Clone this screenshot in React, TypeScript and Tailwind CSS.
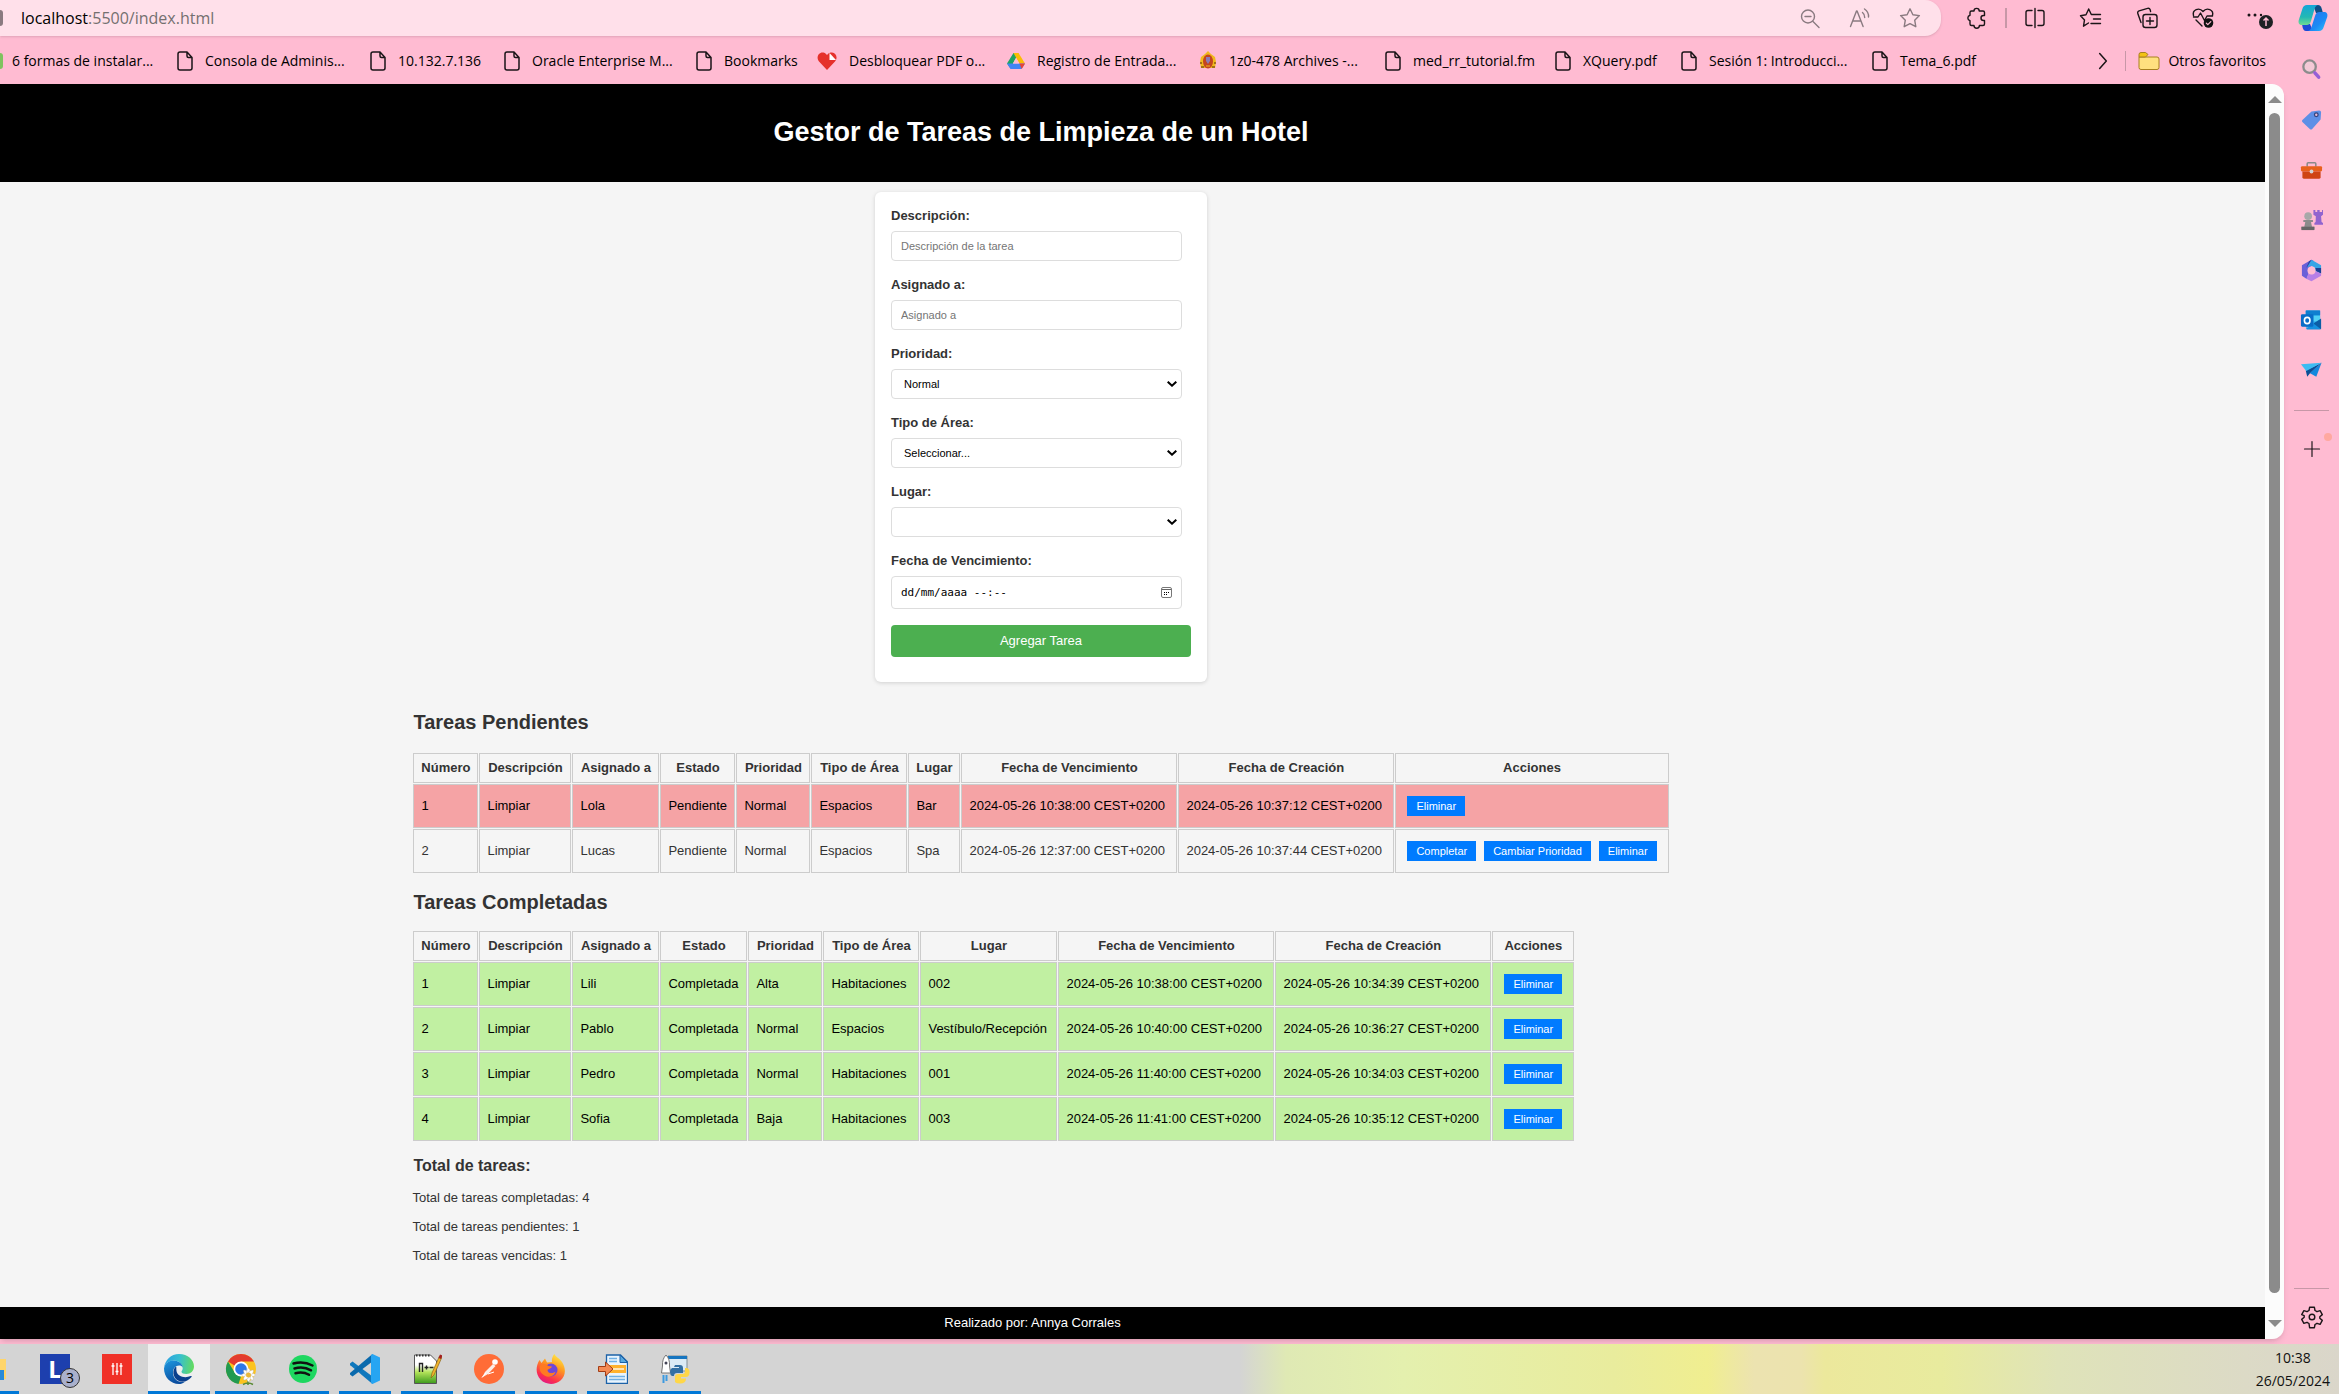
import React from "react";

type Kids = { children: React.ReactNode };

/* ---------- Browser toolbar icons ---------- */

function Line({ children, size = "size-6", color = "text-[#1b1518]" }: Kids & { size?: string; color?: string }) {
  return (
    <svg viewBox="0 0 24 24" className={`${size} ${color} shrink-0`} fill="none" stroke="currentColor" strokeWidth="1.4" strokeLinecap="round" strokeLinejoin="round" aria-hidden="true">
      {children}
    </svg>
  );
}

const ZoomOut = () => (
  <Line color="text-[#8a7a80]">
    <circle cx="10" cy="10.500" r="6.500" />
    <path d="M7 10.500h6M15 15.500l6 6" />
  </Line>
);

const ReadAloud = () => (
  <Line color="text-[#8a7a80]">
    <path d="M2.500 20.500L8.500 5h.6l6 15.500M5 15h8M14.500 6.500c1.700 1.300 2.300 3 2.200 5M16.500 3c3 2 4.300 4.500 4 8" />
  </Line>
);

const Star = () => (
  <Line color="text-[#8a7a80]">
    <path d="M12 2.800l2.900 5.900 6.500.9-4.700 4.600 1.100 6.500L12 17.600l-5.800 3.100 1.100-6.500L2.600 9.600l6.500-.9z" />
  </Line>
);

const Puzzle = () => (
  <Line>
    <path d="M9 5a2.600 2.600 0 0 1 5.200 0h3.800a1.500 1.500 0 0 1 1.500 1.500v3h-1a2.500 2.500 0 0 0 0 5h1v3.500a1.500 1.500 0 0 1-1.500 1.500h-3.600a2.700 2.700 0 0 1-5.400 0H6.500A1.500 1.500 0 0 1 5 18v-3.200a2.900 2.900 0 0 1 0-5.600V6.500A1.500 1.500 0 0 1 6.500 5z" />
  </Line>
);

const SplitScreen = () => (
  <Line>
    <path d="M12 2.500v19M9 4.500H5a2 2 0 0 0-2 2v11a2 2 0 0 0 2 2h4M15 4.500h4a2 2 0 0 1 2 2v11a2 2 0 0 1-2 2h-4" />
  </Line>
);

const Favorites = () => (
  <Line>
    <path d="M13.500 8.500h-1.200L9.700 3 7 8.800l-5.500.9 4 4.200-1 6.300L9.500 17M13.500 8.500h8M14.500 13h7M12 17.500h9.500" />
  </Line>
);

const Collections = () => (
  <Line>
    <rect x="8" y="8.500" width="14" height="13" rx="2.500" />
    <path d="M15 11.500v7M11.500 15h7M6 16.500l-3.200-9a2 2 0 0 1 1.300-2.600l8.500-2.500c1.200-.3 2.200.3 2.600 1.400l.4 1.700" />
  </Line>
);

const Essentials = () => (
  <Line>
    <path d="M2.500 9.500C1 4 8 .8 12 5.500c4-4.700 11-1.500 9.500 4M2.500 11h4.500l2.500-4 4 7.500 2.500-4.500h5.500M5 14l6 6" />
    <circle cx="17.500" cy="17" r="4.800" fill="#111" stroke="none" />
    <path d="M15.300 17.200l1.500 1.500 3-3" stroke="#ffbbd2" strokeWidth="1.200" />
  </Line>
);

function MoreMenu() {
  return (
    <svg viewBox="0 0 30 30" className="size-[30px]" aria-hidden="true">
      <circle cx="5" cy="12" r="1.500" fill="#1b1518" />
      <circle cx="11" cy="12" r="1.500" fill="#1b1518" />
      <circle cx="17" cy="12" r="1.200" fill="#1b1518" />
      <circle cx="22" cy="19" r="7" fill="#1e2124" />
      <path d="M22 23v-8M19.500 17.500L22 15l2.500 2.500" stroke="#ffbbd2" strokeWidth="1.500" fill="none" />
    </svg>
  );
}

function Copilot() {
  return (
    <svg viewBox="0 0 30 28" className="h-7 w-[30px]" aria-hidden="true">
      <defs>
        <linearGradient id="cpA" x1="0" y1="0" x2="0" y2="1">
          <stop offset="0" stopColor="#17a5d8" />
          <stop offset=".6" stopColor="#22b8b4" />
          <stop offset="1" stopColor="#6fdc92" />
        </linearGradient>
        <linearGradient id="cpB" x1="0" y1="0" x2="1" y2="1">
          <stop offset="0" stopColor="#2870ea" />
          <stop offset=".6" stopColor="#1b8bf5" />
          <stop offset="1" stopColor="#2ec3fb" />
        </linearGradient>
      </defs>
      <path d="M15 1h5c2 0 3 1.400 3.500 3L25 9h-7z" fill="#0f4f86" />
      <path d="M8 27c-2 0-2.700-1.300-3.300-3.200L4 20h8l3 7z" fill="#1d49d6" />
      <path d="M9 1h11c-2 .4-3 2-3.500 4L13 17c-.8 2.600-2 4-4.500 4H4c-2.800 0-4-2-3.200-5L4.500 4.500C5.200 2.300 6.600 1 9 1z" fill="url(#cpA)" />
      <path d="M21 27H10c2-.4 3-2 3.500-4L17 12c.8-2.600 2-4 4.500-4H26c2.800 0 4 2 3.200 5l-3.700 10.500C24.800 25.700 23.400 27 21 27z" fill="url(#cpB)" />
    </svg>
  );
}

/* ---------- Bookmark icons ---------- */

const PageIcon = () => (
  <svg viewBox="0 0 16 20" className="h-5 w-4 shrink-0" fill="none" stroke="#1b1518" strokeWidth="1.500" strokeLinejoin="round" aria-hidden="true">
    <path d="M10 1H3a2 2 0 0 0-2 2v14a2 2 0 0 0 2 2h10a2 2 0 0 0 2-2V6.500zM10 1v4a1.500 1.500 0 0 0 1.500 1.500H15" />
  </svg>
);

const HeartIcon = () => (
  <svg viewBox="0 0 20 18" className="h-[18px] w-5 shrink-0" aria-hidden="true">
    <path d="M10 18L2 9.500C-1.500 5 2-.5 6.500.5 8.500 1 10 3 10 3s2-3 5-2.500C19.500 1 21 6 18 9.500z" fill="#e5302b" />
    <path d="M12.500 1l6.500 7h-6.500z" fill="#fff" />
  </svg>
);

const DriveIcon = () => (
  <svg viewBox="0 0 18 18" className="size-[18px] shrink-0" aria-hidden="true">
    <path d="M6.500 1h5L3.500 16.500 0 11.500z" fill="#1fa463" />
    <path d="M6.500 1h5L18 11.500h-5.500z" fill="#fbbc04" />
    <path d="M3.500 17L0 11.500h18L14.500 17z" fill="#4285f4" />
    <path d="M12.500 11.500H18L14.700 17z" fill="#ea4335" />
    <path d="M9 6l3.200 5.500H5.800z" fill="#ffbbd2" />
  </svg>
);

const CrestIcon = () => (
  <svg viewBox="0 0 18 20" className="h-5 w-[18px] shrink-0" aria-hidden="true">
    <path d="M6 3l3-3 3 3 4 3 1 5-1 6H2l-1-6 1-5z" fill="#f0b81c" />
    <ellipse cx="9" cy="10.500" rx="5" ry="7" fill="#c4451f" />
    <path d="M2 16h3M13 16h3M1 12h2M15 12h2" stroke="#8a5a12" strokeWidth="1.500" />
    <path d="M7 6h4v4l-2 3-2-3z" fill="#8d7bb5" />
    <path d="M7 15h4" stroke="#f0b81c" />
  </svg>
);

const FolderIcon = () => (
  <svg viewBox="0 0 22 20" className="h-5 w-[22px] shrink-0" aria-hidden="true">
    <path d="M1 6h18a2 2 0 0 1 2 2v8.500a2 2 0 0 1-2 2H3a2 2 0 0 1-2-2z" fill="#ffe07f" stroke="#a8801f" />
    <path d="M1 6V3.500a2 2 0 0 1 2-2h4.500L10 3.500 7.500 6z" fill="#f2c214" stroke="#a8801f" />
  </svg>
);

const bookmarks = [
  { text: "Consola de Adminis...", icon: <PageIcon />, width: "w-[193px]" },
  { text: "10.132.7.136", icon: <PageIcon />, width: "w-[134px]" },
  { text: "Oracle Enterprise M...", icon: <PageIcon />, width: "w-[192px]" },
  { text: "Bookmarks", icon: <PageIcon />, width: "w-[121px]" },
  { text: "Desbloquear PDF o...", icon: <HeartIcon />, width: "w-[190px]" },
  { text: "Registro de Entrada...", icon: <DriveIcon />, width: "w-[192px]" },
  { text: "1z0-478 Archives -...", icon: <CrestIcon />, width: "w-[186px]" },
  { text: "med_rr_tutorial.fm", icon: <PageIcon />, width: "w-[170px]" },
  { text: "XQuery.pdf", icon: <PageIcon />, width: "w-[126px]" },
  { text: "Sesión 1: Introducci...", icon: <PageIcon />, width: "w-[191px]" },
  { text: "Tema_6.pdf", icon: <PageIcon />, width: "w-[120px]" },
];

function ToolButton({ label, children, width = "w-14" }: Kids & { label: string; width?: string }) {
  return (
    <button type="button" aria-label={label} className={`flex h-9 shrink-0 items-center justify-center ${width}`}>
      {children}
    </button>
  );
}

function Toolbar() {
  return (
    <div className="flex h-9 items-center font-['Open_Sans','Noto_Sans',sans-serif]">
      <div className="flex h-9 flex-1 items-center rounded-r-2xl bg-[#ffe0ea] shadow-sm">
        <div className="h-4 w-[3px] rounded-r-full bg-[#8a7a80]" />
        <p className="flex-1 pl-[18px] text-base text-[#747070]">
          <span className="text-black">localhost</span>:5500/index.html
        </p>
        <ToolButton label="Alejar" width="w-[50px]"><ZoomOut /></ToolButton>
        <ToolButton label="Leer en voz alta" width="w-[50px]"><ReadAloud /></ToolButton>
        <ToolButton label="Agregar a favoritos" width="w-[50px]"><Star /></ToolButton>
        <div className="w-1.5" />
      </div>
      <div className="w-2" />
      <ToolButton label="Extensiones"><Puzzle /></ToolButton>
      <div className="h-5 w-0.5 bg-[#c797a7]" />
      <ToolButton label="Pantalla dividida"><SplitScreen /></ToolButton>
      <ToolButton label="Favoritos"><Favorites /></ToolButton>
      <ToolButton label="Colecciones"><Collections /></ToolButton>
      <ToolButton label="Rendimiento"><Essentials /></ToolButton>
      <ToolButton label="Configuración y más"><MoreMenu /></ToolButton>
      <ToolButton label="Copilot" width="w-[52px]"><Copilot /></ToolButton>
    </div>
  );
}

function BookmarkBar() {
  return (
    <nav className="flex h-12 items-center overflow-hidden whitespace-nowrap pt-0.5 font-['Open_Sans','Noto_Sans',sans-serif] text-sm text-black">
      <a href="#" className="flex w-[177px] shrink-0 items-center gap-[9px]">
        <span className="h-4 w-[3px] rounded-r-full bg-[#7fc25f]" />
        6 formas de instalar...
      </a>
      {bookmarks.map((b) => (
        <a key={b.text} href="#" className={`flex shrink-0 items-center gap-3 ${b.width}`}>
          {b.icon}
          {b.text}
        </a>
      ))}
      <div className="ml-auto flex items-center pr-[18px]">
        <button type="button" aria-label="Más marcadores">
          <Line size="size-5"><path d="M8 3l8 9-8 9" strokeWidth="1.800" /></Line>
        </button>
        <div className="mx-3 h-5 w-px bg-[#c797a7]" />
        <a href="#" className="flex items-center gap-2">
          <FolderIcon />
          Otros favoritos
        </a>
      </div>
    </nav>
  );
}

/* ---------- Sidebar ---------- */

const sideIcons = [
  {
    label: "Buscar",
    art: (
      <>
        <circle cx="10" cy="8" r="6.500" fill="#f3c9d6" stroke="#8c8c8c" strokeWidth="2.400" />
        <path d="M15.500 14.500l4 4.500" stroke="#9560d6" strokeWidth="3.600" strokeLinecap="round" />
      </>
    ),
  },
  {
    label: "Compras",
    art: (
      <>
        <path d="M12 2.500L20 1.500q2 0 2 2L21.500 11l-9 10q-1 1-2 0L2.500 13.500q-1-1 0-2z" fill="#5d8fe6" />
        <circle cx="17" cy="6" r="1.900" fill="#e7b9d5" stroke="#33437d" strokeWidth="1.300" />
      </>
    ),
  },
  {
    label: "Herramientas",
    art: (
      <>
        <path d="M7.500 8V5q0-1 1-1h7q1 0 1 1v3" fill="none" stroke="#8a8a8a" strokeWidth="1.600" />
        <rect x="1" y="7.500" width="22" height="5.500" rx="1.200" fill="#e8601c" />
        <path d="M2.500 13h19v6q0 1.500-1.500 1.500H4q-1.500 0-1.500-1.500z" fill="#cf4414" />
        <circle cx="12" cy="13" r="2" fill="#d3d3d3" />
      </>
    ),
  },
  {
    label: "Juegos",
    art: (
      <>
        <path d="M14 1h2v2h2V1h2.500v2H23V1h1v5l-2 1.500.5 6 1.500 1v2h-9v-2l1.300-1 .2-6L14 6z" fill="#9164cf" />
        <circle cx="8.500" cy="7.500" r="4" fill="#a8a8a8" />
        <path d="M3.500 11.500h10v2h-2l1 5h2.500v3H1.500v-3H4.500l1-5h-2z" fill="#8b8b8b" />
        <path d="M1.500 18.500h13.500v3.500H1.500z" fill="#666" />
      </>
    ),
  },
  {
    label: "Microsoft 365",
    art: (
      <>
        <path d="M12 .8L2 6.500v11l5 3.300 2-6-.5-5 3.500-2.500 2-5.500z" fill="#6a5fd8" />
        <path d="M12 .8l10 5.700v8.500l-6-2.500-1-4-4-1.500L7 9z" fill="#38a5e6" />
        <path d="M22 9.500v5.500l-5.500-2.500-.5-3z" fill="#1c3f96" />
        <path d="M22 15v2.500L12 23.200 6.500 20.500 9 15l4 1 3-3.500z" fill="#b77fe6" />
        <path d="M7 9l5-8.200L9.500 2.300 7 8z" fill="#27459f" />
        <circle cx="12" cy="12" r="4.200" fill="#ffbbd2" />
      </>
    ),
  },
  {
    label: "Outlook",
    art: (
      <>
        <rect x="6" y="1.500" width="15" height="18" rx="1" fill="#28a8ea" />
        <path d="M6 1.500h15v5H6z" fill="#0e7fd0" />
        <path d="M14 7h7v6h-7z" fill="#50d0f5" />
        <path d="M6 20.500L22 11v9q0 1.500-1.500 1.500h-13z" fill="#1490df" />
        <path d="M22 21L14 15l8-5z" fill="#0b5da5" />
        <rect x="1" y="5.500" width="13" height="13" rx="1.200" fill="#0a6cc7" />
        <ellipse cx="7.500" cy="12" rx="2.900" ry="3.300" fill="none" stroke="#fff" strokeWidth="1.700" />
      </>
    ),
  },
  {
    label: "Drop",
    art: (
      <>
        <path d="M22.500 4L17 18.500 10 14.500z" fill="#1488dd" />
        <path d="M22.500 4L6 12l1.500 6.500L11 14z" fill="#0b4f96" />
        <path d="M1 5.500L6.500 12.500 22.500 4z" fill="#3cbcf2" />
      </>
    ),
  },
];

function Sidebar() {
  return (
    <aside className="flex w-[55px] shrink-0 flex-col items-center pt-[9px]">
      {sideIcons.map((s) => (
        <button key={s.label} type="button" aria-label={s.label} className="flex h-[50px] w-full items-center justify-center">
          <svg viewBox="0 0 24 24" className="size-[23px]" aria-hidden="true">{s.art}</svg>
        </button>
      ))}
      <hr className="mt-[15px] w-[35px] border-[#c797a7]" />
      <button type="button" aria-label="Personalizar" className="relative mt-[13px] flex h-[50px] w-full items-center justify-center">
        <Line size="size-5"><path d="M12 3v18M3 12h18" /></Line>
        <span className="absolute right-[7px] top-[9px] size-2 rounded-full bg-[#ffa8a0]" />
      </button>
      <hr className="mt-auto w-[35px] border-[#c797a7]" />
      <button type="button" aria-label="Configuración" className="flex h-[55px] w-full items-center justify-center">
        <Line>
          <circle cx="12" cy="12" r="2.800" />
          <path d="M9.600 2.300h4.800l.6 3.200 2 1.200 3.100-1.100 2.200 4-2.500 2.100v1.600l2.500 2.100-2.200 4-3.100-1.100-2 1.200-.6 3.200H9.600L9 18.500l-2-1.200-3.100 1.100-2.200-4 2.500-2.100v-1.600L1.700 9.600l2.200-4L7 6.700l2-1.200z" />
        </Line>
      </button>
    </aside>
  );
}

/* ---------- Hotel cleaning page ---------- */

const fieldBox = "w-full rounded-sm border border-[#dddddd] bg-white text-[11px]";

function Field({ id, label, children }: Kids & { id: string; label: string }) {
  return (
    <div className="mb-4">
      <label htmlFor={id} className="mb-[7px] block text-[13px] leading-4 font-bold text-[#333333]">{label}</label>
      <div className="relative w-[291px]">{children}</div>
    </div>
  );
}

function Select({ id, options }: { id: string; options: string[] }) {
  return (
    <>
      <select id={id} className={`${fieldBox} h-[30px] appearance-none px-3 text-black`}>
        {options.map((o) => <option key={o}>{o}</option>)}
      </select>
      <svg viewBox="0 0 10 6" className="pointer-events-none absolute right-[5px] top-3 h-1.5 w-2.5" fill="none" stroke="#000" strokeWidth="2" aria-hidden="true">
        <path d="M.7.700L5 4.700 9.300.700" />
      </svg>
    </>
  );
}

function TaskForm() {
  return (
    <form className="mt-2.5 w-[332px] rounded-md bg-white p-4 pb-[25px] shadow-[0_1px_4px_rgba(0,0,0,0.15)]">
      <Field id="descripcion" label="Descripción:">
        <input id="descripcion" placeholder="Descripción de la tarea" className={`${fieldBox} block h-[30px] px-[9px] placeholder:text-[#757575]`} />
      </Field>
      <Field id="asignado" label="Asignado a:">
        <input id="asignado" placeholder="Asignado a" className={`${fieldBox} block h-[30px] px-[9px] placeholder:text-[#757575]`} />
      </Field>
      <Field id="prioridad" label="Prioridad:"><Select id="prioridad" options={["Normal", "Alta", "Baja"]} /></Field>
      <Field id="area" label="Tipo de Área:"><Select id="area" options={["Seleccionar...", "Habitaciones", "Espacios"]} /></Field>
      <Field id="lugar" label="Lugar:"><Select id="lugar" options={[""]} /></Field>
      <Field id="fecha" label="Fecha de Vencimiento:">
        <input id="fecha" placeholder="dd/mm/aaaa --:--" className={`${fieldBox} block h-[33px] px-[9px] font-['DejaVu_Sans_Mono','Liberation_Mono',monospace] placeholder:text-black`} />
        <button type="button" aria-label="Abrir calendario" className="absolute right-2.5 top-[11px]">
          <svg viewBox="0 0 11 11" className="block size-[11px]" aria-hidden="true">
            <rect x=".5" y=".5" width="10" height="10" rx="1.500" fill="#fff" stroke="#777" />
            <path d="M1 2.500h9" stroke="#666" />
            <path d="M5 5h1v1H5zM7 5h1v1H7zM3 7h1v1H3zM5 7h1v1H5zM3 5h1v1H3z" fill="#000" />
          </svg>
        </button>
      </Field>
      <button type="button" className="block h-8 w-full rounded-sm bg-[#4caf50] text-[13px] text-white">Agregar Tarea</button>
    </form>
  );
}

type Column = { name: string; width: string };
type Row = { cells: string[]; tone: string; actions: string[] };

const pendingColumns: Column[] = [
  { name: "Número", width: "w-[65px]" },
  { name: "Descripción", width: "w-[92px]" },
  { name: "Asignado a", width: "w-[87px]" },
  { name: "Estado", width: "w-[75px]" },
  { name: "Prioridad", width: "w-[74px]" },
  { name: "Tipo de Área", width: "w-[96px]" },
  { name: "Lugar", width: "w-[52px]" },
  { name: "Fecha de Vencimiento", width: "w-[216px]" },
  { name: "Fecha de Creación", width: "w-[216px]" },
  { name: "Acciones", width: "w-[271px]" },
];

const doneColumns: Column[] = [
  { name: "Número", width: "w-[65px]" },
  { name: "Descripción", width: "w-[92px]" },
  { name: "Asignado a", width: "w-[87px]" },
  { name: "Estado", width: "w-[87px]" },
  { name: "Prioridad", width: "w-[74px]" },
  { name: "Tipo de Área", width: "w-[96px]" },
  { name: "Lugar", width: "w-[137px]" },
  { name: "Fecha de Vencimiento", width: "w-[216px]" },
  { name: "Fecha de Creación", width: "w-[216px]" },
  { name: "Acciones", width: "w-[81px]" },
];

const green = "bg-[#c1f0a2] text-black";

const pendingRows: Row[] = [
  { tone: "bg-[#f5a3a5] text-black", actions: ["Eliminar"], cells: ["1", "Limpiar", "Lola", "Pendiente", "Normal", "Espacios", "Bar", "2024-05-26 10:38:00 CEST+0200", "2024-05-26 10:37:12 CEST+0200"] },
  { tone: "", actions: ["Completar", "Cambiar Prioridad", "Eliminar"], cells: ["2", "Limpiar", "Lucas", "Pendiente", "Normal", "Espacios", "Spa", "2024-05-26 12:37:00 CEST+0200", "2024-05-26 10:37:44 CEST+0200"] },
];

const doneRows: Row[] = [
  { tone: green, actions: ["Eliminar"], cells: ["1", "Limpiar", "Lili", "Completada", "Alta", "Habitaciones", "002", "2024-05-26 10:38:00 CEST+0200", "2024-05-26 10:34:39 CEST+0200"] },
  { tone: green, actions: ["Eliminar"], cells: ["2", "Limpiar", "Pablo", "Completada", "Normal", "Espacios", "Vestíbulo/Recepción", "2024-05-26 10:40:00 CEST+0200", "2024-05-26 10:36:27 CEST+0200"] },
  { tone: green, actions: ["Eliminar"], cells: ["3", "Limpiar", "Pedro", "Completada", "Normal", "Habitaciones", "001", "2024-05-26 11:40:00 CEST+0200", "2024-05-26 10:34:03 CEST+0200"] },
  { tone: green, actions: ["Eliminar"], cells: ["4", "Limpiar", "Sofia", "Completada", "Baja", "Habitaciones", "003", "2024-05-26 11:41:00 CEST+0200", "2024-05-26 10:35:12 CEST+0200"] },
];

function TaskTable({ columns, rows }: { columns: Column[]; rows: Row[] }) {
  return (
    <table className="border-separate border-spacing-px whitespace-nowrap text-[13px]">
      <thead>
        <tr>
          {columns.map((c) => (
            <th key={c.name} scope="col" className={`h-[30px] border border-[#cccccc] font-bold ${c.width}`}>{c.name}</th>
          ))}
        </tr>
      </thead>
      <tbody>
        {rows.map((r) => (
          <tr key={r.cells[0]}>
            {r.cells.map((text, i) => (
              <td key={i} className={`h-11 border border-[#cccccc] px-[7px] ${r.tone}`}>{text}</td>
            ))}
            <td className={`h-11 border border-[#cccccc] px-[11px] ${r.tone}`}>
              <div className="flex gap-2">
                {r.actions.map((a) => (
                  <button key={a} type="button" className="h-5 bg-[#007bff] px-[9px] text-[11px] text-white">{a}</button>
                ))}
              </div>
            </td>
          </tr>
        ))}
      </tbody>
    </table>
  );
}

function Page() {
  return (
    <div className="flex flex-1 flex-col bg-[#f5f5f5] font-['Liberation_Sans',Arial,sans-serif] text-[#333333]">
      <header className="flex h-[98px] items-center justify-center bg-black pr-[183px] pb-0.5">
        <h1 className="text-[27px] leading-8 font-bold text-white">Gestor de Tareas de Limpieza de un Hotel</h1>
      </header>
      <main className="flex flex-1 flex-col items-center pr-[183px]">
        <TaskForm />
        <div>
          <h2 className="mt-7 mb-[18px] pl-px text-xl leading-6 font-bold">Tareas Pendientes</h2>
          <TaskTable columns={pendingColumns} rows={pendingRows} />
          <h2 className="mt-4 mb-4 pl-px text-xl leading-6 font-bold">Tareas Completadas</h2>
          <TaskTable columns={doneColumns} rows={doneRows} />
          <h3 className="mt-3.5 mb-3.5 pl-px text-base leading-5 font-bold">Total de tareas:</h3>
          <div className="flex flex-col gap-[13px] text-[13px] leading-4">
            <p>Total de tareas completadas: 4</p>
            <p>Total de tareas pendientes: 1</p>
            <p>Total de tareas vencidas: 1</p>
          </div>
        </div>
      </main>
      <footer className="flex h-8 items-center justify-center bg-black pr-[200px] text-[13px] text-white">
        Realizado por: Annya Corrales
      </footer>
    </div>
  );
}

function Scrollbar() {
  return (
    <div className="flex w-[19px] flex-col items-center bg-[#fcfcfc] pt-3 pb-3">
      <svg viewBox="0 0 14 7" className="h-[7px] w-3.5" aria-hidden="true"><path d="M0 7L7 0l7 7z" fill="#8b8b8b" /></svg>
      <div className="mt-2.5 mb-[27px] w-[11px] flex-1 rounded-full bg-[#8b8b8b]" />
      <svg viewBox="0 0 14 7" className="h-[7px] w-3.5" aria-hidden="true"><path d="M0 0l7 7 7-7z" fill="#8b8b8b" /></svg>
    </div>
  );
}

/* ---------- Taskbar ---------- */

const Edge = () => (
  <svg viewBox="0 0 30 30" className="size-[30px]" aria-hidden="true">
    <defs>
      <linearGradient id="edgeTop" x1="0" y1=".4" x2="1" y2=".5">
        <stop offset="0" stopColor="#2a9fe0" />
        <stop offset=".5" stopColor="#36bfd0" />
        <stop offset="1" stopColor="#64db5d" />
      </linearGradient>
      <linearGradient id="edgeLow" x1="0" y1="0" x2=".4" y2="1">
        <stop offset="0" stopColor="#1c97e0" />
        <stop offset="1" stopColor="#0c4fa0" />
      </linearGradient>
    </defs>
    <path d="M0 14C1 6 7 0 15 0c9 0 15 6 15 12.500 0 4.500-3.500 7.500-7.500 7.500-3 0-5-1-5-2.300 0-1 1.200-1.400 1.200-3.500C18.700 10 14.500 6.500 9.500 6.500 5 6.500 1 9.500 0 14z" fill="url(#edgeTop)" />
    <path d="M0 14.500C1 9 5 6.500 9.500 6.500c4.700 0 9 3.200 9.200 7-.7-1.400-2-2-3.700-2-3.500 0-6 3-6 7 0 5.500 4 9.500 9 9.500 2 0 3-.3 3-.3C19 29.300 17 30 15 30 6.500 30 0 23 0 14.500z" fill="url(#edgeLow)" />
    <path d="M12 12.500c-4 3-3.500 11 2 14 4.500 2.400 9.500 1.300 13.500-3.500.5-.7 0-1.200-.7-.9-6.300 2.700-13.300.4-14.300-5.100-.4-2 .2-3.700-.5-4.500z" fill="#0a3f8c" />
  </svg>
);

const Chrome = () => (
  <svg viewBox="0 0 30 30" className="size-[30px] overflow-visible" aria-hidden="true">
    <circle cx="15" cy="15" r="15" fill="#fcc31e" />
    <path d="M2 7.500A15 15 0 0 1 28 7.500H15v8z" fill="#e33b2e" />
    <path d="M2 7.500L9 19l6 3.500L12.500 30A15 15 0 0 1 2 7.500z" fill="#219a50" />
    <circle cx="15" cy="15" r="7.500" fill="#fff" />
    <circle cx="15" cy="15" r="5.800" fill="#2f78e8" />
    <path d="M22 22v9M17 30.500q5-3 10 0" stroke="#5a8a35" strokeWidth="1.500" fill="none" />
    {[0, 45, 90, 135].map((a) => <ellipse key={a} cx="22.500" cy="21" rx="6.800" ry="2.100" fill="#fff" stroke="#b5ac98" strokeWidth=".4" transform={`rotate(${a} 22.500 21)`} />)}
    <circle cx="22.500" cy="21" r="2.500" fill="#e8b83a" />
  </svg>
);

const Spotify = () => (
  <svg viewBox="0 0 30 30" className="size-[30px]" aria-hidden="true">
    <circle cx="15" cy="15" r="14" fill="#1ed760" />
    <path d="M5.500 9.500q10-2.800 19 2M6.500 14.500q9-2.500 16.500 1.800M7.500 19.200q7.500-2 13.500 1.600" stroke="#111" strokeWidth="2.500" strokeLinecap="round" fill="none" />
  </svg>
);

const Code = () => (
  <svg viewBox="0 0 30 30" className="size-[30px]" aria-hidden="true">
    <path d="M0 9.500l2.500-2 20 15V30L.3 11.200q-.8-.8-.3-1.700z" fill="#0f78bd" />
    <path d="M0 20.500l2.500 2L22.500 7.500V0L.3 18.800q-.8.800-.3 1.700z" fill="#0a6aad" />
    <path d="M22.500 0L30 3.500v23L22.500 30q-1.500-.5-1.500-2V2q0-1.500 1.500-2z" fill="#27a5f2" />
  </svg>
);

const NotepadPP = () => (
  <svg viewBox="0 0 30 30" className="size-[30px]" aria-hidden="true">
    <defs>
      <linearGradient id="npp" x1="0" y1="0" x2="0" y2="1">
        <stop offset=".35" stopColor="#fff" />
        <stop offset=".6" stopColor="#b4e35a" />
        <stop offset="1" stopColor="#3c9a1c" />
      </linearGradient>
    </defs>
    <path d="M2.500 1h16l6 6v22.500h-22z" fill="url(#npp)" stroke="#555" />
    <path d="M4 1.500h15" stroke="#333" strokeWidth="2" strokeDasharray="1.500 1.500" />
    <path d="M7.500 18V9.500h3V18M12.500 13.500h4M14.500 11.500v4M17.500 13.500h4" stroke="#222" strokeWidth="1.400" fill="none" />
    <path d="M19 24l1-5L27.500 2l2.500 1L22 21z" fill="#f0b32a" stroke="#8a6418" strokeWidth=".7" />
    <path d="M26.500 4L28 .5l2.500 1L29 5z" fill="#a32020" />
  </svg>
);

const Postman = () => (
  <svg viewBox="0 0 30 30" className="size-[30px]" aria-hidden="true">
    <circle cx="15" cy="15" r="15" fill="#ff6c37" />
    <circle cx="21" cy="8" r="2.800" fill="#fff" />
    <path d="M19 10l2.500 2-7.500 8-6 3.500 3-5.500z" fill="#fbeee8" />
    <path d="M8 23.500l4-4.500M14 20l6-2" stroke="#fff" strokeWidth="1" />
  </svg>
);

const Firefox = () => (
  <svg viewBox="0 0 30 30" className="size-[30px]" aria-hidden="true">
    <defs>
      <linearGradient id="ff" x1=".8" y1="0" x2=".3" y2="1">
        <stop offset="0" stopColor="#fff04a" />
        <stop offset=".4" stopColor="#ff9a1f" />
        <stop offset=".8" stopColor="#fb2d4e" />
        <stop offset="1" stopColor="#e0188a" />
      </linearGradient>
    </defs>
    <path d="M18.500 0c1 3 5 4 7.500 8 4.500 7 3.500 14-1.500 18.500-6 5-15 4.300-20-1-5-5.500-5-13-1-19.500L5.500 9 9 4.500l2 4 5-.5c-.5-3 .5-6 2.500-8z" fill="url(#ff)" />
    <circle cx="15" cy="16" r="6.500" fill="#6f47d8" />
    <path d="M4 12c3-3 7-2 8 0l4 .5c-1 2.500-4 2-4.500 4 .5 3 5 3.500 8 1-1 5-7 6.500-11 4S3 16 4 12z" fill="#ff7a22" />
  </svg>
);

const DocExport = () => (
  <svg viewBox="0 0 30 30" className="size-[30px]" aria-hidden="true">
    <path d="M8.500 1h14l7 7v21.500h-21z" fill="#e9f4fd" stroke="#1c62a8" strokeWidth="1.300" />
    <path d="M22 1l7.500 7.500H22z" fill="#58a9e0" stroke="#1c62a8" />
    <path d="M11 4.500h8M11 7.500h8M11 22.500h16M11 25.500h16" stroke="#6fb0e5" strokeWidth="1.400" />
    <path d="M10 11h18v8H10z" fill="#ffb22e" />
    <path d="M12 15h14" stroke="#fff" strokeWidth="1.300" />
    <path d="M.5 12.500h7V8L15 15l-7.500 7v-4.500h-7z" fill="#f58b55" stroke="#a33c15" />
  </svg>
);

const PythonIde = () => (
  <svg viewBox="0 0 30 30" className="size-[30px]" aria-hidden="true">
    <path d="M8 2h19v15H8z" fill="#dcebf5" stroke="#7f8d96" />
    <path d="M8 2h19v3H8z" fill="#1675c0" />
    <path d="M6 1q4 4 3.500 11l1 7h-9l1-7Q2 5 6 1z" fill="#fff" stroke="#777" />
    <circle cx="6" cy="9" r="1.500" fill="#445" />
    <path d="M2.500 21h2v8h-2zM5.500 21h2v6h-2z" fill="#3d9ae0" />
    <path d="M15 11h5q3 0 3 3v5h-6q-3 0-3 3h-2q-2-1-2-4t2-4h7v-1h-5z" fill="#3470a3" />
    <path d="M25 14h2q3 1 2.500 5t-3.500 4h-5v1.500h5Q26 29.500 20 29.500T15 26v-3q0-3 3-3h5q2 0 2-3z" fill="#ffd747" />
  </svg>
);

const LApp = () => (
  <span className="relative flex size-[30px] items-center justify-center bg-[#1d3fae] text-2xl leading-none font-bold text-white">
    L
    <span className="absolute -right-2.5 -bottom-1 flex size-5 items-center justify-center rounded-full border border-[#333] bg-[#a9b0cc] text-sm leading-none font-normal text-black">3</span>
  </span>
);

const Mixer = () => (
  <svg viewBox="0 0 30 30" className="size-[30px]" aria-hidden="true">
    <path d="M0 0h30v30H0z" fill="#f03027" />
    <path d="M11 9v12M15 9v12M19 9v12" stroke="#fff" strokeWidth="1.300" />
    <path d="M9.500 12h3M13.500 17.500h3M17.500 12h3" stroke="#fff" strokeWidth="1.500" />
  </svg>
);

const apps = [
  { name: "LApp", icon: <LApp />, state: "idle" },
  { name: "Mezclador", icon: <Mixer />, state: "idle" },
  { name: "Edge", icon: <Edge />, state: "active" },
  { name: "Chrome", icon: <Chrome />, state: "open" },
  { name: "Spotify", icon: <Spotify />, state: "open" },
  { name: "Code", icon: <Code />, state: "open" },
  { name: "Notepad++", icon: <NotepadPP />, state: "open" },
  { name: "Postman", icon: <Postman />, state: "open" },
  { name: "Firefox", icon: <Firefox />, state: "open" },
  { name: "Documentos", icon: <DocExport />, state: "open" },
  { name: "Python", icon: <PythonIde />, state: "open" },
];

function Taskbar() {
  return (
    <div className="flex h-[50px] items-stretch bg-[linear-gradient(90deg,#d4d4d4_0%,#d4d4d4_53%,#dfe9b4_55%,#e4f0ae_60%,#e9ec9d_69%,#f0ee90_73%,#ece3b0_75%,#ece3ae_77%,#ece89c_78%,#e8eb9e_83%,#dfe3b9_88%,#dcdac6_96%,#dad6ca_100%)] font-['Open_Sans','Noto_Sans',sans-serif]">
      <button type="button" aria-label="Explorador" className="relative w-6">
        <svg viewBox="0 0 7 30" className="absolute left-0 top-2.5 h-[30px] w-[7px]" aria-hidden="true">
          <path d="M0 5h6v20H0z" fill="#ffd56a" />
          <path d="M0 16h4v10H0z" fill="#2a8bd8" />
        </svg>
        <span className="absolute bottom-0 left-0 h-[3px] w-[19px] bg-[#0078d7]" />
      </button>
      {apps.map((a) => (
        <button
          key={a.name}
          type="button"
          aria-label={a.name}
          className={`relative flex w-[62px] items-center justify-center ${a.state === "active" ? "bg-[#eeeeee]" : ""}`}
        >
          {a.icon}
          {a.state !== "idle" && (
            <span className={`absolute bottom-0 h-[3px] bg-[#0078d7] ${a.state === "active" ? "inset-x-0" : "inset-x-[5px]"}`} />
          )}
        </button>
      ))}
      <div className="ml-auto flex flex-col items-center justify-center gap-[3px] pr-[9px] text-sm leading-5 text-[#111]">
        <span>10:38</span>
        <span>26/05/2024</span>
      </div>
    </div>
  );
}

export default function App() {
  return (
    <div className="flex min-h-screen flex-col bg-[#ffbbd2]">
      <Toolbar />
      <div className="flex flex-1">
        <div className="flex min-w-0 flex-1 flex-col">
          <BookmarkBar />
          <div className="mb-[5px] flex flex-1 overflow-hidden rounded-r-xl shadow-md">
            <Page />
            <Scrollbar />
          </div>
        </div>
        <Sidebar />
      </div>
      <Taskbar />
    </div>
  );
}
